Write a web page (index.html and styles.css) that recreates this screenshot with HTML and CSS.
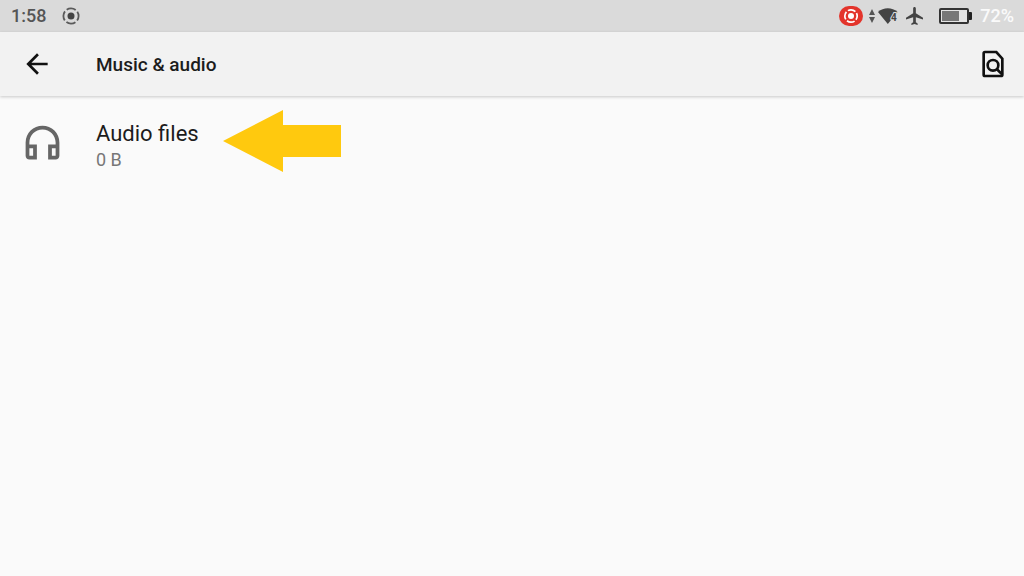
FILE: index.html
```html
<!DOCTYPE html>
<html lang="en">
<head>
  <meta charset="UTF-8">
  <meta name="viewport" content="width=device-width, initial-scale=1">
  <title>Music &amp; audio</title>
  <link rel="stylesheet" href="styles.css">
</head>
<body>

  <div class="status-bar">
    <span class="clock">1:58</span>
    <svg class="icon-cast" viewBox="0 0 20 20" fill="none" stroke="#5a5a5a" stroke-width="1.8">
      <circle cx="10" cy="10" r="3.5" fill="#444" stroke="none"/>
      <circle cx="10" cy="10" r="7.6" stroke-dasharray="9.6 2.338" stroke-dashoffset="4.8"/>
    </svg>

    <div class="status-right">
      <span class="record-badge">
        <svg viewBox="0 0 20 20" fill="none" stroke="#fff" stroke-width="1.7">
          <circle cx="10" cy="10" r="3" fill="#fff" stroke="none"/>
          <circle cx="10" cy="10" r="6.2" stroke-dasharray="8 1.739" stroke-dashoffset="4"/>
        </svg>
      </span>
      <svg class="icon-traffic" viewBox="0 0 6 14" fill="#555">
        <path d="M3 0l3 6H0zM3 14l3-6H0z"/>
      </svg>
      <svg class="icon-wifi" viewBox="0 0 20 16">
        <path fill="#444" d="M0 4C5.500-1 14-1 19.500 4L9.800 16z"/>
        <text x="13" y="13">4</text>
      </svg>
      <svg class="icon-plane" viewBox="2 2 19 20" fill="#444">
        <path d="M21 16v-2l-8-5V3.500c0-.83-.67-1.500-1.500-1.500S10 2.670 10 3.500V9l-8 5v2l8-2.500V19l-2 1.500V22l3.500-1 3.500 1v-1.500L13 19v-5.500l8 2.500z"/>
      </svg>
      <svg class="icon-battery" viewBox="0 0 33 16">
        <rect x="1" y="1" width="28" height="14" rx="1" fill="#e4e4e4" stroke="#333" stroke-width="2"/>
        <rect x="3" y="3" width="17" height="10" fill="#777"/>
        <path d="M30 4h2q1 0 1 1v6q0 1-1 1h-2z" fill="#222"/>
      </svg>
      <span class="percent">72%</span>
    </div>
  </div>

  <header class="toolbar">
    <button class="icon-button" aria-label="Back">
      <svg viewBox="0 0 24 24"><path d="M20 11H7.830l5.590-5.590L12 4l-8 8 8 8 1.410-1.410L7.830 13H20v-2z"/></svg>
    </button>
    <h1>Music &amp; audio</h1>
    <button class="icon-button" aria-label="Search in files">
      <svg class="icon-find" viewBox="0 0 24 24">
        <path d="M6 3h8.500L19 8v12q0 1-1 1H6q-1 0-1-1V4q0-1 1-1z"/>
        <circle cx="12" cy="13" r="4"/>
        <path d="M14.800 15.800L19 20"/>
      </svg>
    </button>
  </header>

  <main>
    <a class="row" href="#">
      <svg class="icon-headset" viewBox="0 0 24 24">
        <path fill-rule="evenodd" d="M12 3a9 9 0 0 0-9 9v7c0 1.100.9 2 2 2h4v-8H5v-1c0-3.870 3.130-7 7-7s7 3.130 7 7v1h-4v8h4c1.100 0 2-.9 2-2v-7a9 9 0 0 0-9-9zM7 15v4H5v-4h2zm12 4h-2v-4h2v4z"/>
      </svg>
      <span class="row-text">
        <span class="row-title">Audio files</span>
        <span class="row-size">0 B</span>
      </span>
      <svg class="pointer" viewBox="0 0 118 62">
        <path d="M0 31L60 0v15h58v32H60v15z"/>
      </svg>
    </a>
  </main>

</body>
</html>
```

FILE: styles.css
```css
* {
  box-sizing: border-box;
}
body {
  margin: 0;
  background: #fafafa;
  color: #1c1c1c;
  font-family: Roboto, sans-serif;
}
svg {
  display: block;
  flex: none;
}
.status-bar {
  display: flex;
  align-items: center;
  height: 32px;
  padding: 0 10px 0 11px;
  background: #dadada;
  font-size: 18px;
  line-height: 34px;
  font-weight: 500;
}
.clock {
  color: #555;
}
.icon-cast {
  width: 20px;
  height: 20px;
  margin-left: 15px;
}
.status-right {
  display: flex;
  align-items: center;
  margin-left: auto;
}
.record-badge {
  display: flex;
  align-items: center;
  justify-content: center;
  width: 24px;
  height: 20px;
  border-radius: 10px;
  background: #e3342b;
}
.record-badge svg {
  width: 20px;
  height: 20px;
}
.icon-traffic {
  width: 6px;
  height: 14px;
  margin-left: 6px;
}
.icon-wifi {
  width: 20px;
  height: 16px;
  margin-left: 3px;
}
.icon-wifi text {
  fill: #444;
  stroke: #dadada;
  stroke-width: 2px;
  paint-order: stroke;
  font-size: 10px;
  font-weight: 700;
}
.icon-plane {
  width: 17px;
  height: 18px;
  margin-left: 8px;
}
.icon-battery {
  width: 33px;
  height: 16px;
  margin-left: 16px;
}
.percent {
  margin-left: 8px;
  color: #fafafa;
}
.toolbar {
  display: flex;
  align-items: center;
  height: 64px;
  padding: 0 15px 0 21px;
  background: #f2f2f2;
  box-shadow: 0 1px 3px rgba(0, 0, 0, 0.2);
}
.toolbar h1 {
  flex: 1;
  margin: 0 0 0 43px;
  padding-top: 2px;
  font-size: 19px;
  line-height: 24px;
  font-weight: 500;
}
.icon-button {
  padding: 0;
  border: none;
  background: none;
  cursor: pointer;
}
.icon-button svg {
  width: 32px;
  height: 32px;
  fill: #111;
}
.icon-button .icon-find {
  fill: none;
  stroke: #111;
  stroke-width: 2px;
}
.row {
  display: flex;
  align-items: flex-start;
  padding: 24px 20px;
  color: inherit;
  text-decoration: none;
}
.icon-headset {
  width: 45px;
  height: 45px;
  fill: #666;
}
.row-text {
  display: flex;
  flex-direction: column;
  margin-left: 31px;
}
.row-title {
  font-size: 22px;
  line-height: 28px;
}
.row-size {
  color: #777;
  font-size: 18px;
  line-height: 24px;
}
.pointer {
  width: 118px;
  height: 62px;
  margin-top: -10px;
  margin-left: 24px;
  fill: #ffc90e;
}
```
